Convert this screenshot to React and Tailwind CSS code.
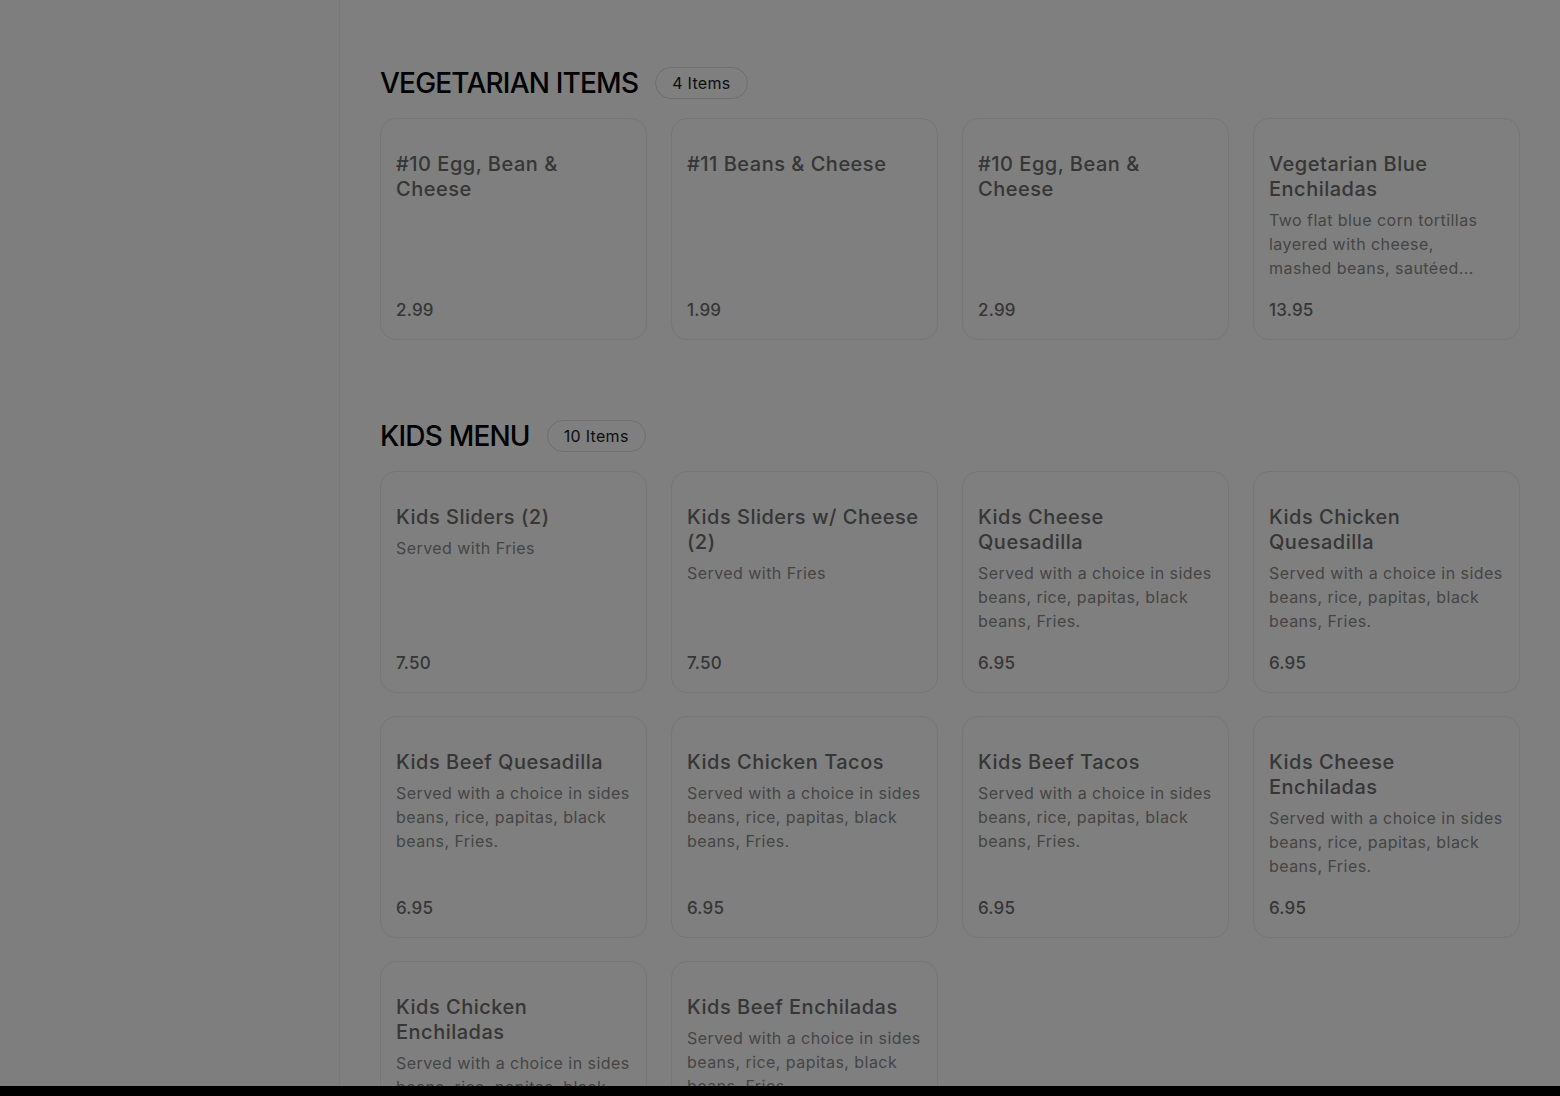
import React from "react";

const SIDES = "Served with a choice in sides beans, rice, papitas, black beans, Fries.";

const sections = [
  {
    title: "VEGETARIAN ITEMS",
    count: "4 Items",
    items: [
      { name: "#10 Egg, Bean & Cheese", price: "2.99" },
      { name: "#11 Beans & Cheese", price: "1.99" },
      { name: "#10 Egg, Bean & Cheese", price: "2.99" },
      {
        name: "Vegetarian Blue Enchiladas",
        desc: "Two flat blue corn tortillas\nlayered with cheese,\nmashed beans, sautéed...",
        price: "13.95",
      },
    ],
  },
  {
    title: "KIDS MENU",
    count: "10 Items",
    items: [
      { name: "Kids Sliders (2)", desc: "Served with Fries", price: "7.50" },
      { name: "Kids Sliders w/ Cheese (2)", desc: "Served with Fries", price: "7.50" },
      { name: "Kids Cheese Quesadilla", desc: SIDES, price: "6.95" },
      { name: "Kids Chicken Quesadilla", desc: SIDES, price: "6.95" },
      { name: "Kids Beef Quesadilla", desc: SIDES, price: "6.95" },
      { name: "Kids Chicken Tacos", desc: SIDES, price: "6.95" },
      { name: "Kids Beef Tacos", desc: SIDES, price: "6.95" },
      { name: "Kids Cheese Enchiladas", desc: SIDES, price: "6.95" },
      { name: "Kids Chicken Enchiladas", desc: SIDES, price: "6.95" },
      { name: "Kids Beef Enchiladas", desc: SIDES, price: "6.95" },
    ],
  },
];

const ItemCard = ({ item }) => (
  <div className="flex flex-col h-[222px] rounded-2xl border border-[#ececec] bg-white pt-[33px] pl-[15px] pr-4 pb-[17px]">
    <h3 className="text-[20px] leading-[25px] font-medium tracking-[0.5px] text-[#6c6c6c]">{item.name}</h3>
    {item.desc && (
      <p className="mt-[6px] text-[16px] leading-6 tracking-[0.45px] text-[#8a8a8a] whitespace-pre-line line-clamp-3">
        {item.desc}
      </p>
    )}
    <div className="mt-auto text-[17px] leading-6 font-medium tracking-[0.2px] text-[#6c6c6c]">{item.price}</div>
  </div>
);

const Section = ({ section }) => (
  <section className="mb-20">
    <div className="flex items-center gap-[17px] mb-[19px]">
      <h2 className="text-[28px] leading-8 font-medium tracking-[-0.8px] text-black">{section.title}</h2>
      <span className="h-8 px-4 flex items-center rounded-full border border-[#dcdcdc] text-[16px] tracking-[0.3px] text-[#1a1a1a]">
        {section.count}
      </span>
    </div>
    <div className="grid grid-cols-4 gap-x-6 gap-y-[23px]">
      {section.items.map((item, i) => (
        <ItemCard key={i} item={item} />
      ))}
    </div>
  </section>
);

export default function App() {
  return (
    <div className="min-h-screen bg-white flex" style={{ fontFamily: "Inter, 'Noto Sans', sans-serif" }}>
      <aside className="w-[340px] shrink-0 border-r border-[#f0f0f0] bg-[#fdfdfd]" />
      <main className="flex-1 px-10 pt-[67px]">
        {sections.map((s) => (
          <Section key={s.title} section={s} />
        ))}
      </main>

      {/* backdrop */}
      <div className="fixed inset-0 bg-black/50" />
      <div className="fixed left-0 right-0 bottom-0 h-[10px] bg-black" />
    </div>
  );
}
